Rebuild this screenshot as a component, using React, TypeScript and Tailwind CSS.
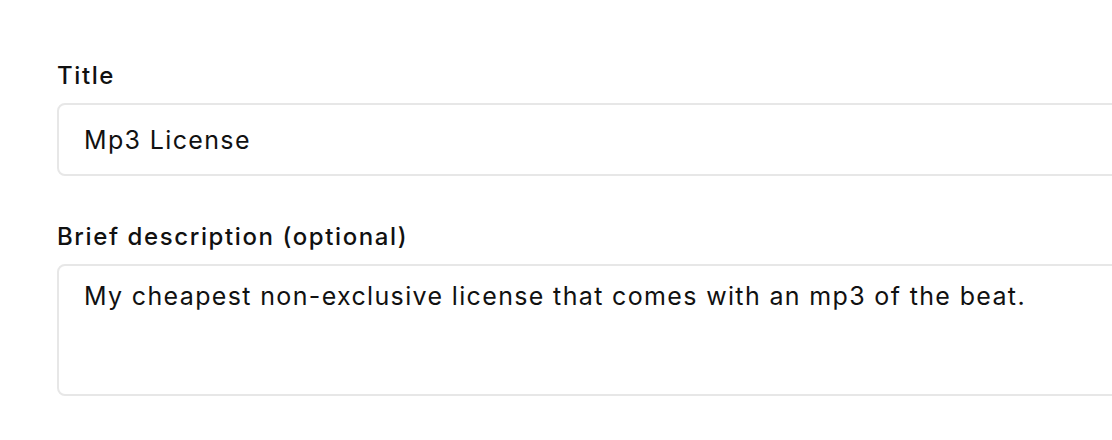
import React from 'react';

const App: React.FC = () => {
  return (
    <div className="w-[1112px] h-[440px] overflow-hidden bg-white font-['Inter','Noto_Sans',sans-serif] text-[#111111]">
      <div className="pl-[57px] pt-[62px] w-[1200px]">
        <label className="block text-[24px] leading-[28px] font-medium tracking-[1.6px] mb-[13px]">Title</label>
        <input
          readOnly
          value="Mp3 License"
          className="block w-[1100px] h-[73px] border-2 border-[#e7e7e7] rounded-[8px] px-[25px] text-[25px] tracking-[1.35px] text-[#111111] bg-white outline-none"
        />
        <label className="block text-[24px] leading-[28px] font-medium tracking-[1.6px] mt-[47px] mb-[13px]">
          Brief description (optional)
        </label>
        <textarea
          readOnly
          value="My cheapest non-exclusive license that comes with an mp3 of the beat."
          className="block w-[1100px] h-[132px] border-2 border-[#e7e7e7] rounded-[8px] px-[25px] pt-[12px] text-[25px] leading-[36px] tracking-[1.35px] text-[#111111] bg-white outline-none resize-none"
        />
      </div>
    </div>
  );
};

export default App;
